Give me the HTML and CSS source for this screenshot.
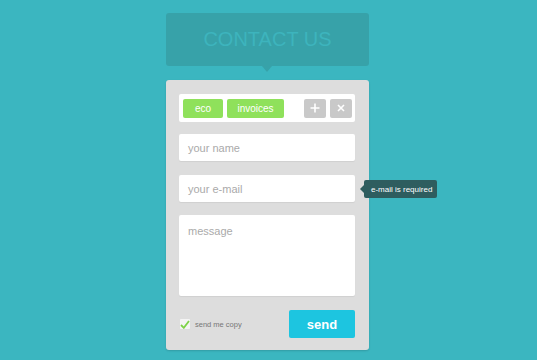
FILE: index.html
```html
<!DOCTYPE html>
<html>
<head>
<meta charset="utf-8">
<link rel="stylesheet" href="styles.css">
</head>
<body>
<div class="wrap">
  <div class="title">CONTACT US</div>
  <div class="card">
    <div class="tags">
      <span class="tag tag-eco">eco</span>
      <span class="tag tag-inv">invoices</span>
      <span class="spacer"></span>
      <span class="btn">
        <svg width="10" height="10" viewBox="0 0 10 10"><path d="M5 0.5V9.5M0.5 5H9.5" stroke="#fff" stroke-width="1.6"/></svg>
      </span>
      <span class="btn">
        <svg width="8" height="8" viewBox="0 0 8 8"><path d="M1 1L7 7M7 1L1 7" stroke="#fff" stroke-width="1.6"/></svg>
      </span>
    </div>
    <div class="field f-name">your name</div>
    <div class="field f-mail">your e-mail
      <span class="tip">e-mail is required</span>
    </div>
    <div class="field f-msg">message</div>
    <div class="foot">
      <span class="check">
        <svg width="10" height="9" viewBox="0 0 10 9"><path d="M1 5L3.8 7.8L9 1" stroke="#7ed348" stroke-width="1.8" fill="none"/></svg>
      </span>
      <span class="copy">send me copy</span>
      <span class="send">send</span>
    </div>
  </div>
</div>
</body>
</html>
```
FILE: styles.css
```css
html, body {
  margin: 0;
  padding: 0;
}
body {
  background: #3bb6c0;
  font-family: "Liberation Sans", Arial, sans-serif;
  height: 360px;
  overflow: hidden;
}
.wrap {
  width: 203px;
  margin: 0 0 0 166px;
  padding-top: 13px;
  display: flex;
  flex-direction: column;
}
.title {
  position: relative;
  height: 53px;
  background: #37a2a9;
  border-radius: 3px;
  color: #3db4bd;
  font-size: 20px;
  display: flex;
  align-items: center;
  justify-content: center;
}
.title::after {
  content: "";
  position: absolute;
  left: 96px;
  bottom: -6px;
  border-left: 5px solid transparent;
  border-right: 5px solid transparent;
  border-top: 6px solid #37a2a9;
}
.card {
  margin-top: 14px;
  background: #dddddd;
  border-radius: 3px;
  padding: 14px 14px 12px 13px;
  box-shadow: 0 1px 2px rgba(0,0,0,0.15);
  display: flex;
  flex-direction: column;
}
.tags {
  height: 28px;
  box-sizing: border-box;
  background: #fff;
  border-radius: 2px;
  padding: 4px 3px 4px 4px;
  display: flex;
  align-items: center;
  gap: 4px;
}
.tag {
  height: 19px;
  background: #8fe15b;
  border-radius: 2px;
  color: #fff;
  font-size: 10px;
  display: flex;
  align-items: center;
  justify-content: center;
}
.tag-eco { width: 40px; }
.tag-inv { width: 57px; }
.spacer { flex: 1; }
.btn {
  width: 22px;
  height: 19px;
  background: #c9c9c9;
  border-radius: 2px;
  display: flex;
  align-items: center;
  justify-content: center;
}
.field {
  position: relative;
  background: #fff;
  border-radius: 2px;
  color: #aaaaaa;
  font-size: 11px;
  padding-left: 9px;
  box-sizing: border-box;
  box-shadow: 0 1px 1px rgba(0,0,0,0.06);
}
.f-name, .f-mail {
  height: 27px;
  display: flex;
  align-items: center;
}
.f-name { margin-top: 12px; }
.f-mail { margin-top: 14px; }
.f-msg {
  margin-top: 13px;
  height: 81px;
  padding-top: 10px;
}
.tip {
  position: absolute;
  left: calc(100% + 9px);
  top: 5px;
  height: 18px;
  padding: 0 5px 0 7px;
  background: #2e5d5f;
  border-radius: 2px;
  color: #fff;
  font-size: 8px;
  white-space: nowrap;
  display: flex;
  align-items: center;
}
.tip::before {
  content: "";
  position: absolute;
  left: -4px;
  top: 5px;
  border-top: 4px solid transparent;
  border-bottom: 4px solid transparent;
  border-right: 4px solid #2e5d5f;
}
.foot {
  margin-top: 14px;
  display: flex;
  align-items: center;
}
.check {
  width: 10px;
  height: 10px;
  margin-left: 1px;
  background: #f4f4f4;
  border-radius: 1px;
  display: flex;
  align-items: center;
  justify-content: center;
}
.copy {
  margin-left: 5px;
  font-size: 7.5px;
  color: #777;
  flex: 1;
}
.send {
  width: 66px;
  height: 28px;
  background: #1dc5e0;
  border-radius: 2px;
  color: #fff;
  font-weight: bold;
  font-size: 13px;
  display: flex;
  align-items: center;
  justify-content: center;
}
```
